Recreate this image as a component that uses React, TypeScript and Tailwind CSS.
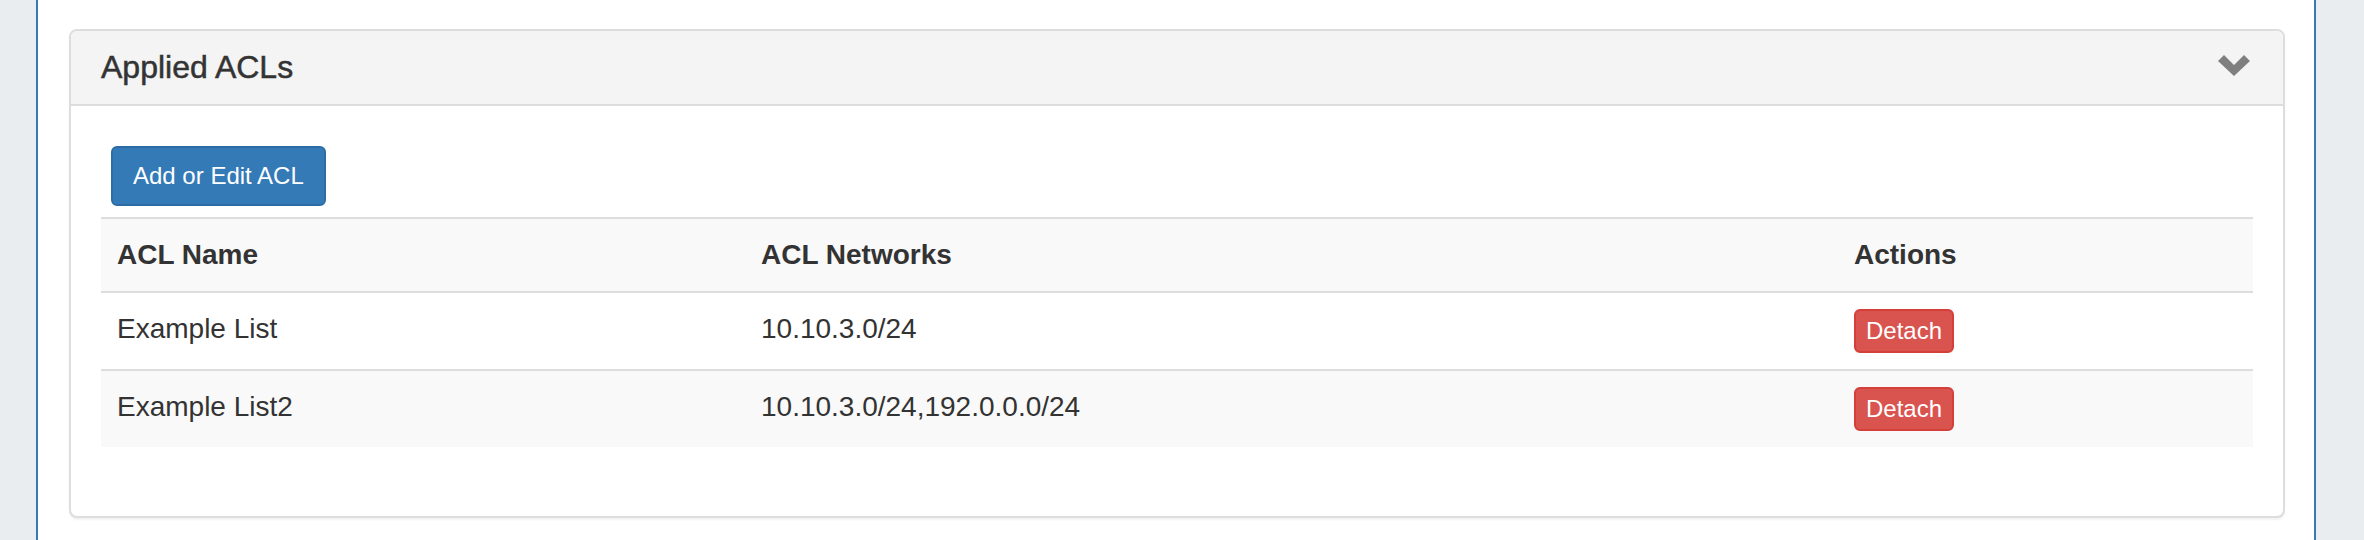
import React from "react";

interface AclRow {
  name: string;
  networks: string;
}

const rows: AclRow[] = [
  { name: "Example List", networks: "10.10.3.0/24" },
  { name: "Example List2", networks: "10.10.3.0/24,192.0.0.0/24" },
];

const ChevronDown: React.FC = () => (
  <svg width="32" height="21" viewBox="0 0 32 21" className="mb-[5px] mr-[3px]">
    <polygon points="0,6 6,0 16,10 26,0 32,6 16,21" fill="#7f7f7f" />
  </svg>
);

const App: React.FC = () => {
  return (
    <div className="flex h-[540px] w-full overflow-hidden bg-[#e9edf0] pl-[36px] pr-[48px] font-['Liberation_Sans',Arial,sans-serif] text-[#333]">
      <div className="flex-1 border-x-2 border-[#337ab7] bg-white pl-[31px] pr-[29px] pt-[29px]">
        {/* Applied ACLs panel */}
        <div className="rounded-[8px] border-2 border-[#ddd] bg-white shadow-[0_2px_2px_rgba(0,0,0,0.05)]">
          <div className="flex items-center justify-between rounded-t-[6px] border-b-2 border-[#ddd] bg-[#f4f4f4] px-[30px] py-[19px]">
            <h3 className="text-[32px] leading-[35px] font-medium [-webkit-text-stroke:0.5px_#333]">Applied ACLs</h3>
            <ChevronDown />
          </div>
          <div className="px-[30px] pt-[30px] pb-[69px]">
            <button className="ml-[10px] mt-[10px] block rounded-[6px] border-2 border-[#2e6da4] bg-[#337ab7] px-[20px] py-[10px] text-[24px] leading-[36px] text-white">
              Add or Edit ACL
            </button>
            <table className="mt-[11px] w-full border-collapse text-[28px] leading-[40px]">
              <thead>
                <tr className="border-t-2 border-[#ddd] bg-[#f9f9f9]">
                  <th className="w-[644px] p-[16px] text-left font-bold">ACL Name</th>
                  <th className="w-[1093px] p-[16px] text-left font-bold">ACL Networks</th>
                  <th className="p-[16px] text-left font-bold">Actions</th>
                </tr>
              </thead>
              <tbody>
                {rows.map((row, i) => (
                  <tr
                    key={row.name}
                    className={`border-t-2 border-[#ddd] ${i % 2 === 1 ? "bg-[#f9f9f9]" : "bg-white"}`}
                  >
                    <td className="p-[16px] align-top">{row.name}</td>
                    <td className="p-[16px] align-top">{row.networks}</td>
                    <td className="p-[16px] align-top">
                      <button className="block rounded-[6px] border-2 border-[#d43f3a] bg-[#d9534f] px-[10px] py-[2px] text-[24px] leading-[36px] text-white">
                        Detach
                      </button>
                    </td>
                  </tr>
                ))}
              </tbody>
            </table>
          </div>
        </div>
      </div>
    </div>
  );
};

export default App;
